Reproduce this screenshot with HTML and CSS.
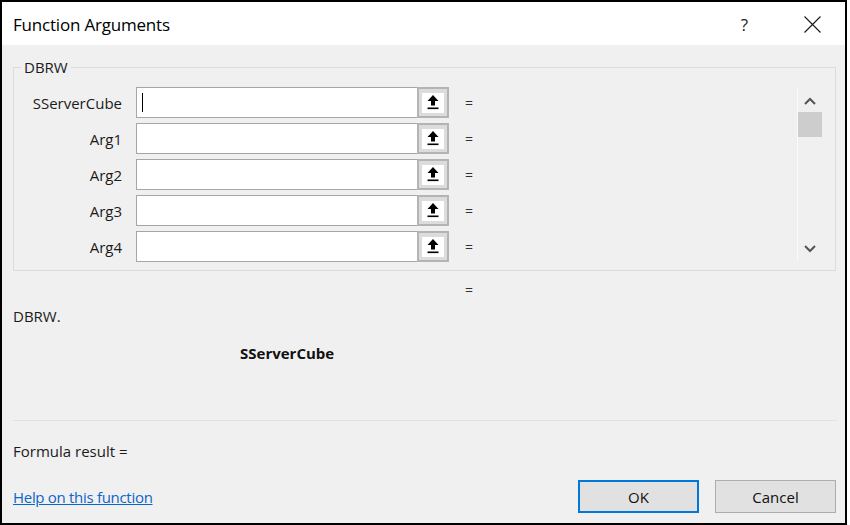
FILE: index.html
```html
<!DOCTYPE html>
<html>
<head>
<meta charset="utf-8">
<link rel="stylesheet" href="styles.css">
</head>
<body>
<div class="dialog">
  <div class="titlebar">
    <span class="title">Function Arguments</span>
    <span class="help">?</span>
    <svg class="close" width="17" height="17" viewBox="0 0 17 17"><path d="M0.5 0.5 L16.5 16.5 M16.5 0.5 L0.5 16.5" stroke="#1a1a1a" stroke-width="1.1" fill="none"/></svg>
  </div>
  <div class="content">
    <fieldset class="group">
      <legend>DBRW</legend>
      <div class="group-body">
        <div class="args">
          <div class="row">
            <label class="lbl">SServerCube</label>
            <div class="field"><span class="caret"></span></div>
            <div class="refbtn"><span class="refinner"><svg width="12" height="15" viewBox="0 0 12 15"><path d="M6 0 L11.5 6 L8 6 L8 10.5 L4 10.5 L4 6 L0.5 6 Z" fill="#000"/><rect x="0.5" y="12.5" width="11" height="1.6" fill="#000"/></svg></span></div>
            <span class="eq">=</span>
          </div>
          <div class="row">
            <label class="lbl">Arg1</label>
            <div class="field"></div>
            <div class="refbtn"><span class="refinner"><svg width="12" height="15" viewBox="0 0 12 15"><path d="M6 0 L11.5 6 L8 6 L8 10.5 L4 10.5 L4 6 L0.5 6 Z" fill="#000"/><rect x="0.5" y="12.5" width="11" height="1.6" fill="#000"/></svg></span></div>
            <span class="eq">=</span>
          </div>
          <div class="row">
            <label class="lbl">Arg2</label>
            <div class="field"></div>
            <div class="refbtn"><span class="refinner"><svg width="12" height="15" viewBox="0 0 12 15"><path d="M6 0 L11.5 6 L8 6 L8 10.5 L4 10.5 L4 6 L0.5 6 Z" fill="#000"/><rect x="0.5" y="12.5" width="11" height="1.6" fill="#000"/></svg></span></div>
            <span class="eq">=</span>
          </div>
          <div class="row">
            <label class="lbl">Arg3</label>
            <div class="field"></div>
            <div class="refbtn"><span class="refinner"><svg width="12" height="15" viewBox="0 0 12 15"><path d="M6 0 L11.5 6 L8 6 L8 10.5 L4 10.5 L4 6 L0.5 6 Z" fill="#000"/><rect x="0.5" y="12.5" width="11" height="1.6" fill="#000"/></svg></span></div>
            <span class="eq">=</span>
          </div>
          <div class="row">
            <label class="lbl">Arg4</label>
            <div class="field"></div>
            <div class="refbtn"><span class="refinner"><svg width="12" height="15" viewBox="0 0 12 15"><path d="M6 0 L11.5 6 L8 6 L8 10.5 L4 10.5 L4 6 L0.5 6 Z" fill="#000"/><rect x="0.5" y="12.5" width="11" height="1.6" fill="#000"/></svg></span></div>
            <span class="eq">=</span>
          </div>
        </div>
        <div class="scrollbar">
          <svg class="chev" width="12" height="8" viewBox="0 0 12 8"><path d="M1 7 L6 2 L11 7" stroke="#555" stroke-width="2" fill="none"/></svg>
          <div class="thumb"></div>
          <div class="track"></div>
          <svg class="chev" width="12" height="8" viewBox="0 0 12 8"><path d="M1 1 L6 6 L11 1" stroke="#555" stroke-width="2" fill="none"/></svg>
        </div>
      </div>
    </fieldset>
    <div class="result-eq">=</div>
    <div class="desc">DBRW.</div>
    <div class="argname">SServerCube</div>
    <div class="sep"></div>
    <div class="formula">Formula result =</div>
    <div class="footer">
      <a class="helplink" href="#">Help on this function</a>
      <div class="buttons">
        <button class="btn btn-ok">OK</button>
        <button class="btn">Cancel</button>
      </div>
    </div>
  </div>
</div>
</body>
</html>
```

FILE: styles.css
```css
html, body {
  margin: 0;
  padding: 0;
  background: #ffffff;
}
body {
  font-family: "Open Sans", "Noto Sans", "Liberation Sans", sans-serif;
  font-size: 15px;
  color: #1b1b1b;
}
.dialog {
  box-sizing: border-box;
  width: 847px;
  height: 525px;
  border: 2px solid #000;
  display: flex;
  flex-direction: column;
  background: #f0f0f0;
}
.titlebar {
  height: 43px;
  flex: none;
  background: #fff;
  display: flex;
  align-items: center;
  padding-left: 11px;
  padding-top: 1px;
  box-sizing: border-box;
}
.title {
  font-size: 17px;
  color: #000;
  flex: 1;
  letter-spacing: -0.2px;
}
.help {
  font-size: 17px;
  color: #222;
  margin-right: 56px;
}
.close {
  margin-right: 24px;
}
.content {
  flex: 1;
  display: flex;
  flex-direction: column;
  padding: 0 9px 0 11px;
}
.group {
  margin: 12px 0 0 0;
  padding: 10px 13px 8px 0;
  border: 1px solid #dcdcdc;
  min-width: 0;
}
.group legend {
  margin-left: 7px;
  padding: 0 3px;
  line-height: 20px;
  color: #1b1b1b;
}
.group-body {
  display: flex;
}
.args {
  flex: 1;
  display: flex;
  flex-direction: column;
  gap: 5px;
}
.row {
  display: flex;
  align-items: center;
  height: 31px;
}
.lbl {
  width: 108px;
  text-align: right;
  margin-right: 14px;
  color: #1b1b1b;
}
.field {
  box-sizing: border-box;
  width: 281px;
  height: 31px;
  background: #fff;
  border: 1px solid #a6a6a6;
  border-right: none;
  display: flex;
  align-items: center;
  padding-left: 5px;
}
.caret {
  width: 1px;
  height: 19px;
  background: #000;
}
.refbtn {
  box-sizing: border-box;
  width: 32px;
  height: 31px;
  border: 2px solid #b4b4b4;
  background: #dcdcdc;
  display: flex;
  align-items: center;
  justify-content: center;
}
.refinner {
  width: 22px;
  height: 20px;
  background: #fff;
  display: flex;
  align-items: center;
  justify-content: center;
}
.eq {
  margin-left: 16px;
  font-size: 14px;
  color: #333;
}
.scrollbar {
  box-sizing: border-box;
  width: 25px;
  border-left: 1px solid #fafafa;
  display: flex;
  flex-direction: column;
  align-items: center;
}
.scrollbar .chev {
  margin-top: 10px;
  flex: none;
}
.scrollbar .chev:last-child {
  margin-top: 0;
  margin-bottom: 9px;
}
.thumb {
  width: 24px;
  height: 25px;
  margin-top: 7px;
  background: #cdcdcd;
}
.track {
  flex: 1;
}
.result-eq {
  margin-top: 9px;
  margin-left: 452px;
  font-size: 14px;
  line-height: 20px;
  color: #333;
}
.desc {
  margin-top: 6px;
  line-height: 20px;
}
.argname {
  margin-top: 17px;
  margin-left: 227px;
  line-height: 20px;
  font-weight: 700;
  color: #111;
}
.sep {
  margin-top: 57px;
  height: 1px;
  background: #e2e2e2;
  margin-right: -1px;
}
.formula {
  margin-top: 20px;
  line-height: 20px;
}
.footer {
  margin-top: 19px;
  display: flex;
  align-items: center;
  justify-content: space-between;
}
.helplink {
  color: #0a66c9;
  text-decoration: underline;
  line-height: 20px;
  letter-spacing: -0.3px;
}
.buttons {
  display: flex;
  gap: 16px;
}
.btn {
  box-sizing: border-box;
  width: 121px;
  height: 33px;
  border: 1px solid #adadad;
  background: #e1e1e1;
  font-family: inherit;
  font-size: 15px;
  color: #111;
  padding: 0;
}
.btn-ok {
  border: 2px solid #0078d7;
}
```
